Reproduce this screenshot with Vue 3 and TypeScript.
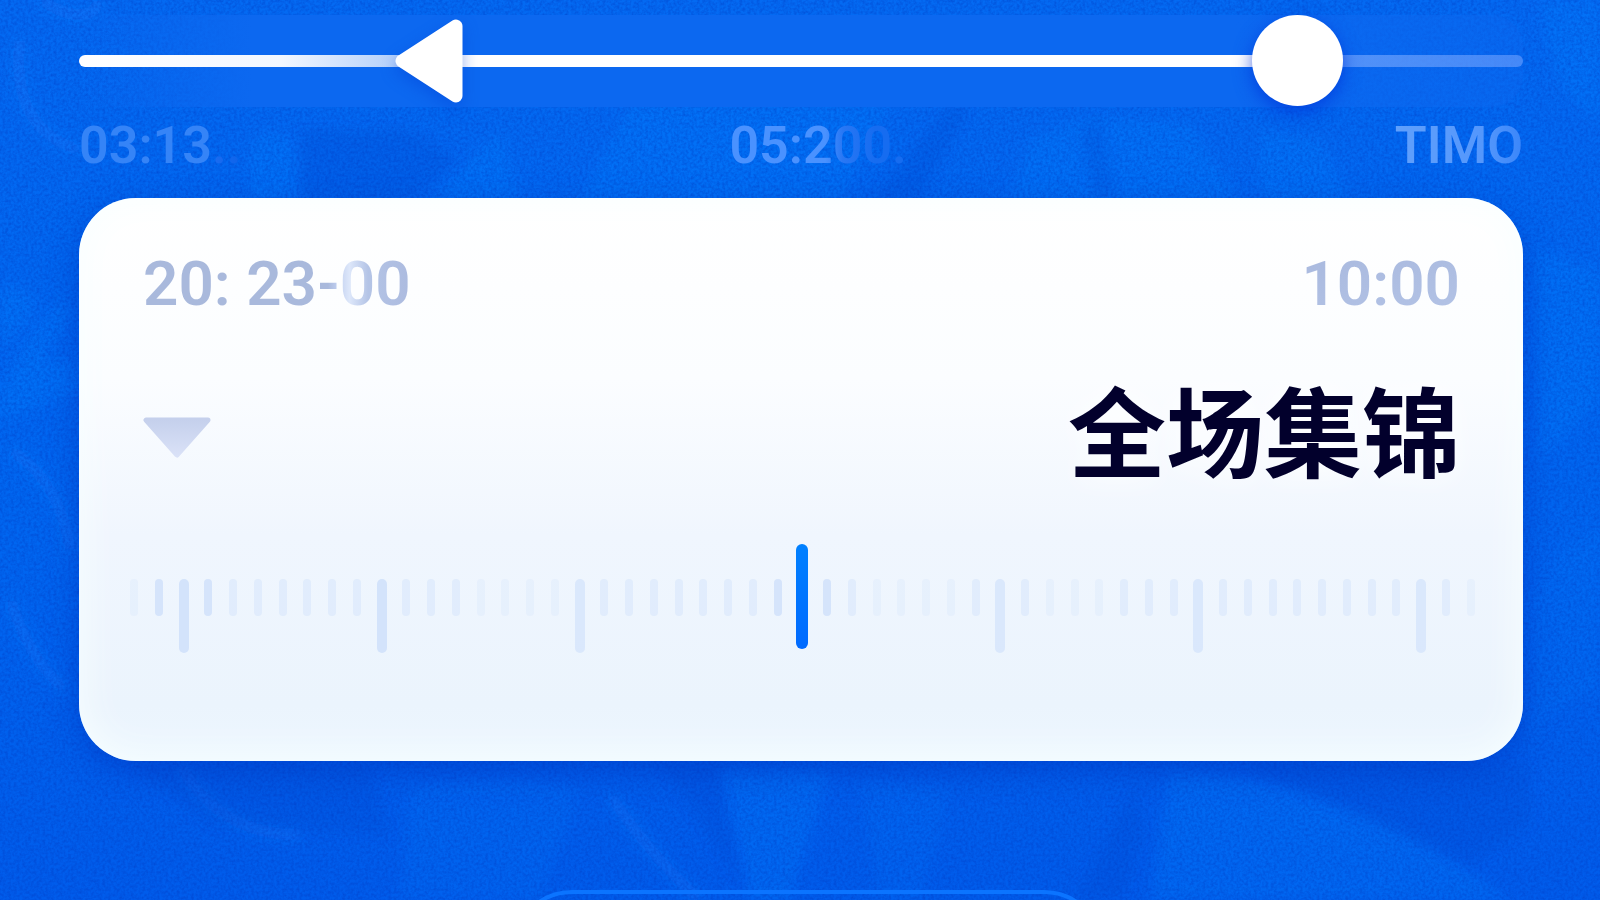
<script setup lang="ts">
import { computed, ref } from 'vue'

interface Tick {
  id: number
  kind: 'short' | 'long' | 'needle'
  opacity: number
}

const TICK_COUNT = 55
const needle = 27
const longTicks = [2, 10, 18, 35, 43, 52]
const strongTicks = [1, 3, 26, 28]
const faintTicks = [0, 14, 15, 16, 17, 30, 31, 32, 33, 37, 38, 39, 54]

const position = ref(867)

const ticks = computed<Tick[]>(() =>
  Array.from({ length: TICK_COUNT }, (_, id): Tick => {
    if (id === needle) return { id, kind: 'needle', opacity: 1 }
    if (longTicks.includes(id)) return { id, kind: 'long', opacity: id < 12 ? 1 : 0.75 }
    if (strongTicks.includes(id)) return { id, kind: 'short', opacity: 0.95 }
    return { id, kind: 'short', opacity: faintTicks.includes(id) ? 0.3 : 0.5 }
  }),
)

const fill = computed(() => ({ '--fill': `${position.value / 10}%` }))
</script>

<template>
  <main class="page">
    <svg class="backdrop" viewBox="0 0 1600 900" preserveAspectRatio="none" aria-hidden="true">
      <defs>
        <filter id="soft" x="-20%" y="-20%" width="140%" height="140%">
          <feGaussianBlur stdDeviation="6" />
        </filter>
        <filter id="grain" x="0" y="0" width="100%" height="100%" color-interpolation-filters="sRGB">
          <feTurbulence type="fractalNoise" baseFrequency="0.35" numOctaves="2" seed="4" />
          <feColorMatrix
            values="0 0 0 0 0
                    0 0 0 0 0.22
                    0 0 0 0 0.75
                    1.6 0 0 0 -0.55"
          />
        </filter>
      </defs>
      <g filter="url(#soft)" fill="#1280ff" fill-opacity="0.28">
        <path d="M250 200V155q0-22 22-22t25 22v45z" />
        <path d="M430 200l50-50 20-20 20 70z" />
        <path d="M580 200l50-95h260l-50 95z" />
        <path d="M1010 200l20-60 60-25 100 10 50 75z" />
        <path d="M1260 200v-70l60 10 30 60z" />
        <path d="M0 290q20-10 32 8 8 20-32 48z" />
        <path d="M0 390q30-60 62-90 20 10-20 56l38 10v26L0 420z" />
        <path d="M1535 250l65 20v130l-60 60z" />
        <path d="M720 770h110l-40 130h-40z" />
        <path d="M1170 770q180 10 340 130h-360l10-60z" />
        <path d="M1540 0h60v120q-50-20-60-120z" />
        <path d="M410 790q80-20 170 0l-40 110H400z" fill-opacity="0.16" />
        <path d="M860 780l90 10-30 110h-40z" fill-opacity="0.14" />
        <path d="M1530 600q30-60 70-70v160q-50 10-70 60z" fill-opacity="0.14" />
      </g>
      <g filter="url(#soft)" fill="none" stroke="#1580ff" stroke-opacity="0.3" stroke-width="12">
        <path d="M20 40q-10 90 60 110" />
        <path d="M40 0q50 30 60 0" />
        <path d="M10 450q50 30 60 100" />
        <path d="M10 600q20 60 55 90" />
        <path d="M610 795q40 60 90 105" />
        <path d="M180 765q40 70 120 70" />
      </g>
      <g filter="url(#soft)" fill="#0048cf" fill-opacity="0.25">
        <path d="M1075 900l50-100q15-20 18 30l-20 70z" />
        <path d="M660 765h60l20 120z" />
        <path d="M130 765h240l20 70-180-10z" />
        <path d="M1240 765h290v60l-60 40z" />
        <path d="M300 130h110l50 30-50 40H300z" />
        <path d="M870 200l80-95h20l-50 95z" />
        <path d="M1080 130l20-15 15 85h-20z" />
      </g>
      <rect width="1600" height="900" filter="url(#grain)" opacity="0.5" />
    </svg>

    <section class="timeline" :style="fill">
      <input
        v-model.number="position"
        class="scrubber"
        type="range"
        min="0"
        max="1000"
        aria-label="Playback position"
      />
      <svg class="marker" viewBox="0 0 68 84" aria-hidden="true">
        <path
          d="M61 7v70L7 42z"
          fill="#fff"
          stroke="#fff"
          stroke-width="13"
          stroke-linejoin="round"
        />
      </svg>
    </section>

    <div class="stamps">
      <span class="stamp start">03:13..</span>
      <span class="stamp middle">05:200.</span>
      <span class="stamp end">TIMO</span>
    </div>

    <section class="card">
      <div class="times">
        <time class="clock date">20: 23-00</time>
        <time class="clock">10:00</time>
      </div>
      <div class="heading">
        <button class="toggle" type="button" aria-label="Expand">
          <svg viewBox="0 0 68 42" aria-hidden="true">
            <defs>
              <linearGradient id="fade" x1="0" y1="0" x2="0" y2="1">
                <stop offset="0" stop-color="#c5d0ec" />
                <stop offset="1" stop-color="#d9e1f7" />
              </linearGradient>
            </defs>
            <path
              d="M3 3h62L34 38z"
              fill="url(#fade)"
              stroke="url(#fade)"
              stroke-width="5"
              stroke-linejoin="round"
            />
          </svg>
        </button>
        <h1 class="title">全场集锦</h1>
      </div>
      <div class="ruler">
        <span v-for="tick in ticks" :key="tick.id" class="slot">
          <i class="tick" :class="tick.kind" :style="{ opacity: tick.opacity }"></i>
        </span>
      </div>
    </section>

    <div class="sheet"></div>
  </main>
</template>

<style>
body {
  margin: 0;
  background: #005ce6;
}
</style>

<style scoped>
.page {
  position: relative;
  box-sizing: border-box;
  height: 100vh;
  min-height: 900px;
  padding: 15px 77px 0 79px;
  overflow: hidden;
  background: linear-gradient(#046af2, #0066f0 60%, #005ceb);
  font-family: Roboto, 'Noto Sans CJK SC', sans-serif;
}

.backdrop {
  position: absolute;
  inset: 0;
  width: 100%;
  height: 100%;
}

.timeline {
  position: relative;
  display: flex;
  align-items: center;
  height: 92px;
  border-radius: 0 32px 32px 0;
  background: linear-gradient(90deg, transparent, #0c68f0 12%, #0c68f0 80%, rgba(12, 104, 240, 0.4));
}

.scrubber {
  width: 100%;
  height: 92px;
  margin: 0;
  appearance: none;
  background: transparent;
  cursor: pointer;
}

.scrubber::-webkit-slider-runnable-track {
  height: 12px;
  border-radius: 6px;
  background: linear-gradient(
    90deg,
    #fff 0%,
    #f2f7ff 14%,
    #b4d0fa 22%,
    #fff 24%,
    #fff var(--fill),
    rgba(130, 175, 255, 0.6) var(--fill),
    rgba(110, 160, 255, 0.6) 100%
  );
}

.scrubber::-webkit-slider-thumb {
  width: 91px;
  height: 91px;
  margin-top: -40px;
  appearance: none;
  border-radius: 50%;
  background: #fff;
  box-shadow: 0 6px 18px rgba(0, 50, 215, 0.7);
}

.marker {
  position: absolute;
  top: 4px;
  left: 316px;
  width: 68px;
  height: 84px;
  overflow: visible;
  filter: drop-shadow(0 6px 8px rgba(0, 60, 210, 0.4));
  pointer-events: none;
}

.stamps {
  position: relative;
  display: flex;
  justify-content: space-between;
  margin: 11px 0 24px;
  font-size: 52px;
  font-weight: 600;
  line-height: 56px;
}

.stamp {
  background-clip: text;
  color: transparent;
}

.start {
  background-image: linear-gradient(90deg, #3584f7 0 80%, #1a6bf0 84%, #0c63ea);
}

.middle {
  background-image: linear-gradient(90deg, #4a92ff 0 54%, #2877f4 64%, #166cf0 82%, #166cf0);
}

.end {
  background-image: linear-gradient(90deg, #60a0fc, #5497fc 70%, #3a86fa);
}

.card {
  position: relative;
  box-sizing: border-box;
  height: 563px;
  padding: 52px 63px 0 64px;
  border-radius: 57px;
  background: linear-gradient(#fff, #fbfdff 32%, #f0f6fe 60%, #ebf4fd 90%, #edf7ff);
  box-shadow:
    inset 0 0 40px #f8ffff,
    0 10px 30px rgba(0, 50, 190, 0.5);
}

.times,
.heading {
  display: flex;
  justify-content: space-between;
}

.clock {
  background: linear-gradient(170deg, #a9b9de, #b3c3e6);
  background-clip: text;
  color: transparent;
  font-size: 62px;
  font-weight: 600;
  line-height: 68px;
}

.date {
  background-image: linear-gradient(90deg, #a9b9dc 0 69%, #bccbed 72%, #dde7fa 77%, #b4c4e6 84%, #acbbdf);
}

.heading {
  height: 120px;
  margin-top: 56px;
}

.toggle {
  align-self: flex-start;
  margin-top: 43px;
  padding: 0;
  border: 0;
  background: none;
  cursor: pointer;
}

.toggle svg {
  display: block;
  width: 68px;
  height: 42px;
}

.title {
  margin: 0;
  color: #02002c;
  font-family: 'Noto Sans CJK SC', sans-serif;
  font-size: 98px;
  font-weight: 700;
  line-height: 106px;
  text-shadow: 0 0 30px #fff;
}

.ruler {
  display: flex;
  justify-content: space-between;
  margin: 50px -17px 0 -15px;
}

.slot {
  display: flex;
  justify-content: center;
  width: 12px;
}

.tick {
  width: 8px;
  height: 37px;
  margin-top: 35px;
  border-radius: 6px;
  background: #d3e3fb;
}

.long {
  width: 10px;
  height: 74px;
}

.needle {
  width: 12px;
  height: 105px;
  margin-top: 0;
  background: linear-gradient(#0080ff, #006aff);
}

.sheet {
  position: relative;
  box-sizing: border-box;
  width: 41%;
  height: 120px;
  margin: 129px 0 0 30%;
  border: 4px solid #0b74ff;
  border-radius: 60px;
}
</style>
